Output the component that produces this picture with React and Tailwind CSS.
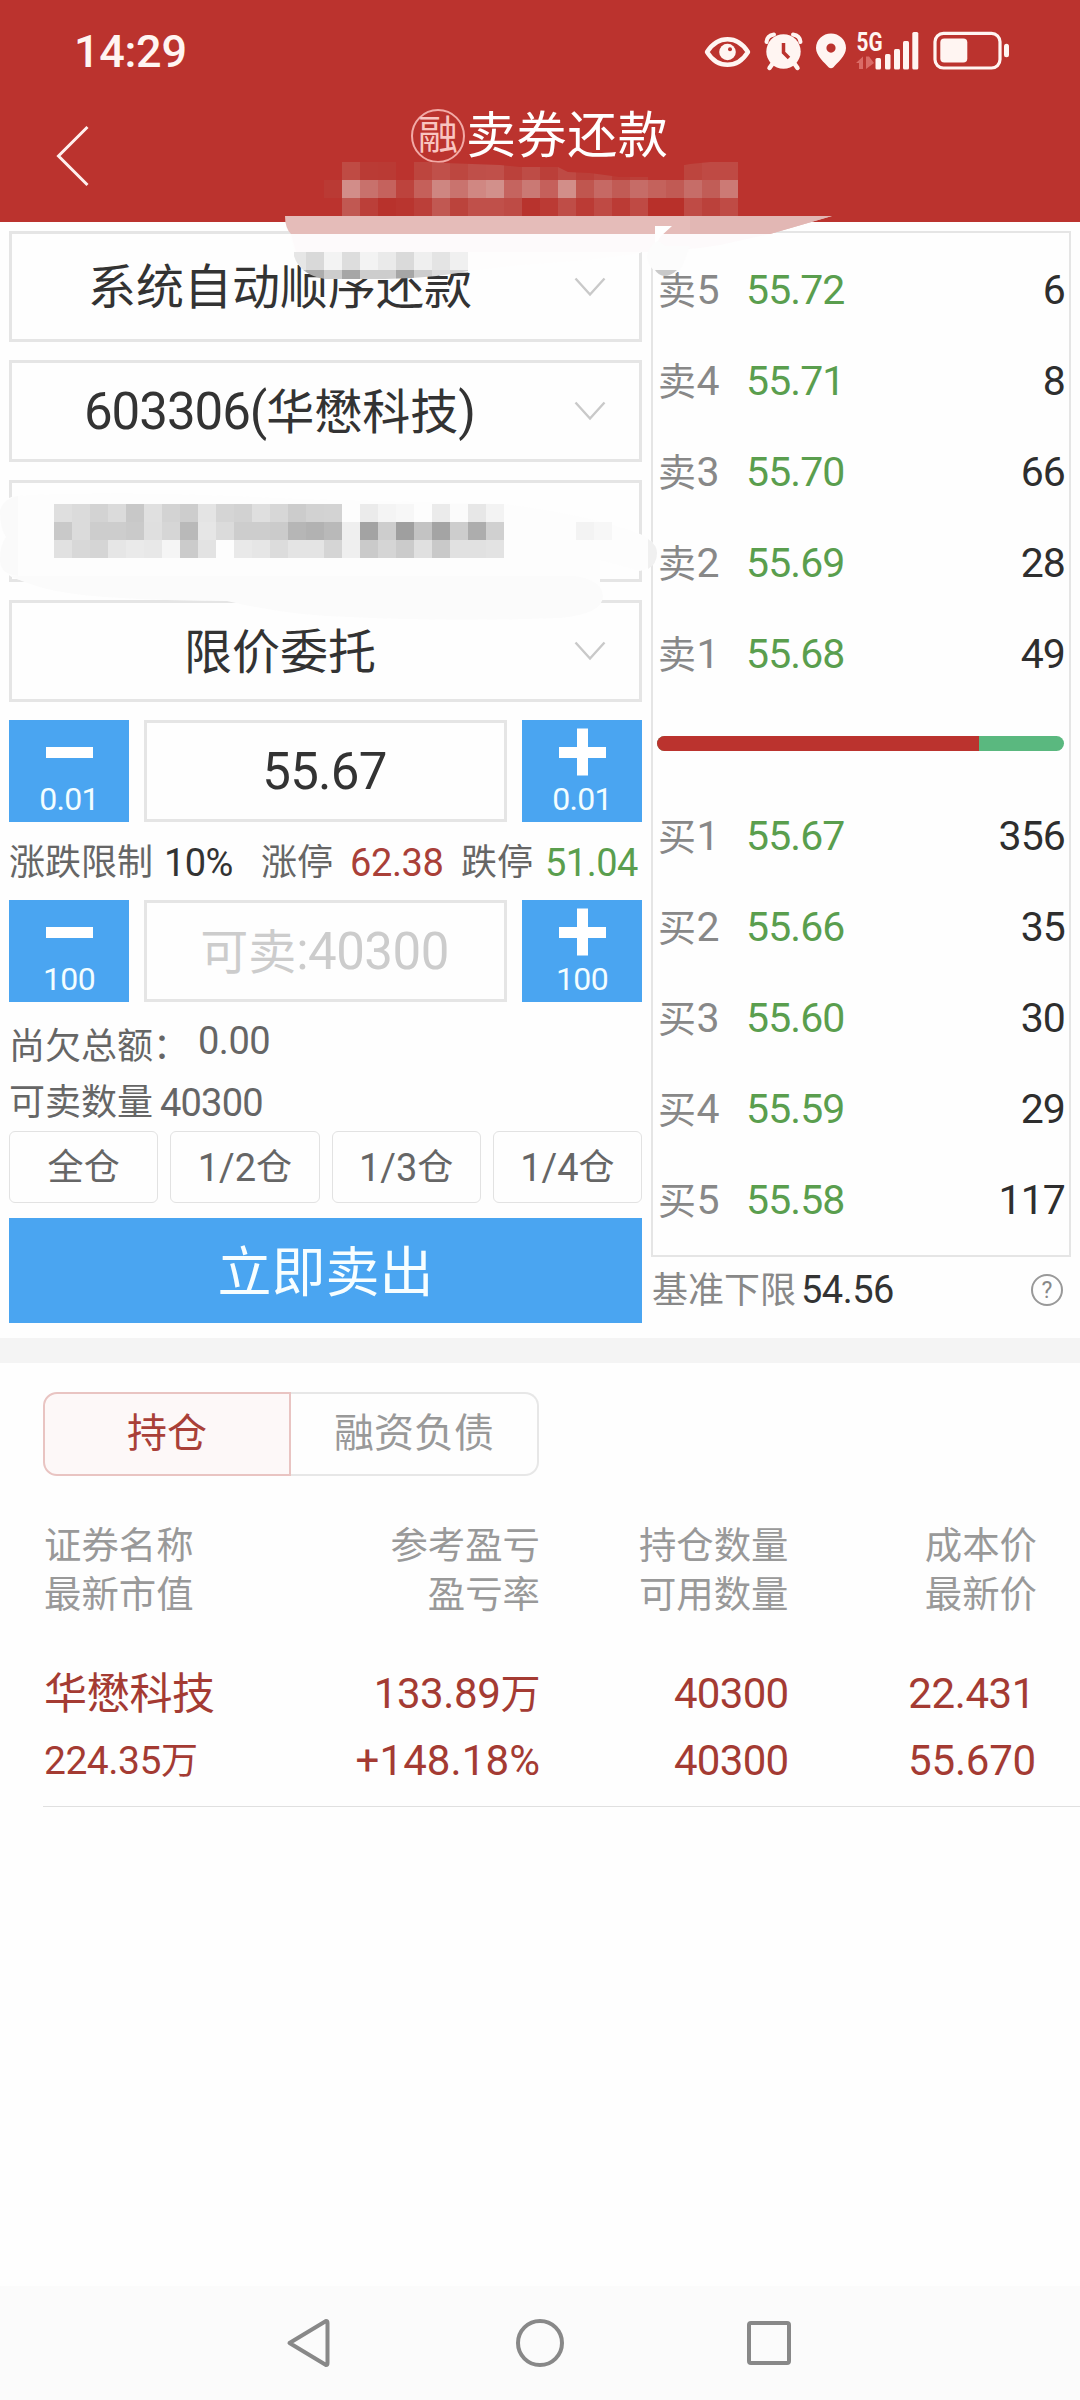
import React from "react";

const ASKS = [
  ["卖5", "55.72", "6"],
  ["卖4", "55.71", "8"],
  ["卖3", "55.70", "66"],
  ["卖2", "55.69", "28"],
  ["卖1", "55.68", "49"],
];
const BIDS = [
  ["买1", "55.67", "356"],
  ["买2", "55.66", "35"],
  ["买3", "55.60", "30"],
  ["买4", "55.59", "29"],
  ["买5", "55.58", "117"],
];

const TITLE_MOSAIC = [
  ["", "bf4b44", "ba3b35", "ba3a34", "", "bd453e", "c0504a", "bd4740", "bf4f49", "c0504a", "bb413b", "be4c46", "bb3f39", "be4a44", "bb3f39", "bd4640", "bb3b35", "bb3f39", "", "", "bd453e", "bf4a44", "bf4a44"],
  ["ba3a34", "d28d89", "c8716c", "c5625d", "bd433d", "c5605a", "ce8681", "c9736e", "d08782", "d2908b", "c5645f", "ca7974", "c5605b", "d28e89", "c0564f", "c66964", "c15b55", "c66c67", "c4625c", "c15a54", "c66d68", "c15d57", "cc7a75"],
  ["", "c15852", "bb3f39", "b8322c", "b9352f", "bb3f39", "c15852", "bb433c", "c0504a", "c0504a", "be4b45", "b8332d", "bb3a34", "bf4d47", "bb3b35", "bf4a44", "bb3b35", "bf4a44", "b8302a", "b8302a", "bf4b45", "bb413b", "bf4b45"],
];

const FIELD_MOSAIC = [
  ["dfdfdf", "dbdbdb", "d3d3d3", "dbdbdb", "c8c8c8", "e0e0e0", "d3d3d3", "cdcdcd", "e4e4e4", "d5d5d5", "d2d2d2", "dfdfdf", "d7d7d7", "cccccc", "d2d2d2", "d3d3d3", "fdfdfd", "ebebeb", "f4f4f4", "f7f7f7", "fdfdfd", "ebebeb", "fbfbfb", "e7e7e7", "f3f3f3"],
  ["c9c9c9", "dbdbdb", "cdcdcd", "cdcdcd", "cacaca", "dfdfdf", "d6d6d6", "b9b9b9", "e6e6e6", "dbdbdb", "cdcdcd", "cdcdcd", "cbcbcb", "b6b6b6", "b2b2b2", "b9b9b9", "efefef", "a3a3a3", "cdcdcd", "9f9f9f", "c3c3c3", "a4a4a4", "cdcdcd", "adadad", "d0d0d0"],
  ["e1e1e1", "d8d8d8", "d5d5d5", "e6e6e6", "eaeaea", "e8e8e8", "f5f5f5", "cbcbcb", "e3e3e3", "fdfdfd", "e9e9e9", "e6e6e6", "dcdcdc", "e4e4e4", "e4e4e4", "d5d5d5", "efefef", "cacaca", "d5d5d5", "cbcbcb", "e0e0e0", "c9c9c9", "e1e1e1", "e1e1e1", "e3e3e3"],
];

const NOTE_MOSAIC = [
  ["e6e6e6", "d9d9d9", "f3f3f3", "dddddd", "f3f3f3", "eaeaea", "dadada", "efefef", "e4e4e4", "f0f0f0"],
  ["bcbcbc", "acacac", "cdcdcd", "a6a6a6", "cdcdcd", "cdcdcd", "a6a6a6", "cdcdcd", "dcdcdc", "d0d0d0"],
];

function Mosaic({ rows, x, y }) {
  return rows.map((row, r) =>
    row.map((c, i) =>
      c ? <rect key={r + "-" + i} x={x + i * 18} y={y + r * 18} width="18" height="18" fill={"#" + c} shapeRendering="crispEdges" /> : null
    )
  );
}

/* Brush strokes and pixel blocks that hide the account details. */
function Redactions() {
  return (
    <svg className="pointer-events-none absolute left-0 top-0" width="1080" height="720" viewBox="0 0 1080 720">
      <defs>
        <clipPath id="titleClip">
          <path d="M320 162H414V161L445 163L500 165L520 167L558 167L568 172L590 173L620 177H660L668 168L690 164L710 162H738V216H320Z" />
        </clipPath>
        <clipPath id="noteClip">
          <path d="M294 252H468V271Q430 279 370 279H325Q300 275 294 256Z" />
        </clipPath>
      </defs>
      <g clipPath="url(#titleClip)">
        <Mosaic rows={TITLE_MOSAIC} x={324} y={162} />
      </g>
      <path d="M290 234H652Q656 246 640 253Q600 260 520 265L468 271H330Q296 268 294 250Z" fill="#fefdfd" />
      <path d="M291 234H770L720 245L700 248L650 252H296Z" fill="#fdfafb" />
      <path d="M285 216H832L770 234H291Q285 228 285 216Z" fill="#e5bcb9" />
      <path d="M690 216H832L770 234H690Z" fill="#e2b7b4" />
      <path d="M655 226H672L660 237L655 247Z" fill="#fff" />
      <g clipPath="url(#noteClip)">
        <Mosaic rows={NOTE_MOSAIC} x={288} y={252} />
      </g>
      <path d="M658 241Q647 246 647 258Q650 270 660 275H673Q680 272 684 262L690 246H666Z" fill="#fcfcfc" />
      <path d="M655 270H677Q671 276 664 276Q658 275 655 270Z" fill="#c9c9c9" />

      <path d="M14 496Q0 500 0 515Q0 529 6 537Q0 546 0 561Q3 576 20 580L170 596H600V560L640 571Q656 566 657 553Q655 540 640 534Q590 515 504 504L300 499Q120 490 14 496Z" fill="#fdfdfd" />
      <path d="M10 576Q40 590 75 594Q120 600 227 601Q290 616 350 617Q450 622 560 618Q603 614 603 596Q602 580 575 576Z" fill="#fbfbfb" />
      <path d="M0 511Q3 499 18 496V576Q0 574 0 560Q0 545 6 537Q0 528 0 511Z" fill="#fafafa" />
      <path d="M648 539Q657 545 657 553Q657 564 648 569Z" fill="#f0f0f0" />
      <Mosaic rows={FIELD_MOSAIC} x={54} y={504} />
      <rect x="576" y="522" width="18" height="18" fill="#f3f3f3" />
      <rect x="594" y="522" width="18" height="18" fill="#f7f7f7" />
    </svg>
  );
}

function StatusIcons() {
  return (
    <svg width="306" height="60" viewBox="704 21 306 60" fill="#fff5f2">
      <path d="M707 52Q715 39.200 727.500 39.200Q740 39.200 748 52Q740 64.800 727.500 64.800Q715 64.800 707 52Z" fill="none" stroke="#fff5f2" strokeWidth="4.400" strokeLinejoin="round" />
      <circle cx="727.500" cy="52" r="8.300" />
      <circle cx="730" cy="49.300" r="2" fill="#bb332e" />
      <circle cx="783.500" cy="51.500" r="17.200" />
      <path d="M766.500 42Q767 35.500 774 34.500M800.500 42Q800 35.500 793 34.500" fill="none" stroke="#fff5f2" strokeWidth="4" strokeLinecap="round" />
      <path d="M773 63L769.500 68M794 63L797.500 68" stroke="#fff5f2" strokeWidth="4.500" strokeLinecap="round" />
      <path d="M783.500 43V52.500L789 58" fill="none" stroke="#bb332e" strokeWidth="3.500" />
      <path fillRule="evenodd" d="M831 33.500A15 14.500 0 0 1 846 48C846 56 837 63 833.500 67.200Q831 69.500 828.500 67.200C825 63 816 56 816 48A15 14.500 0 0 1 831 33.500ZM831 43.500A4.600 4.600 0 1 0 831 52.700A4.600 4.600 0 1 0 831 43.500Z" />
      <text x="856.500" y="51.300" fontFamily="Roboto" fontSize="26" fontWeight="700" textLength="26" lengthAdjust="spacingAndGlyphs">5G</text>
      <path d="M856 63L863 56.500V69H859V63ZM866 56.500H869L874 63L866 69Z" fill="#da6b66" />
      <rect x="875.500" y="58" width="5.500" height="11.500" rx="1.500" />
      <rect x="885" y="54" width="5.500" height="15.500" rx="1.500" />
      <rect x="894" y="49" width="6" height="20.500" rx="1.500" />
      <rect x="903" y="41" width="6" height="28.500" rx="1.500" />
      <rect x="912.300" y="32" width="6" height="37.500" rx="1.500" />
      <rect x="935" y="33.300" width="65" height="34.700" rx="8.500" fill="none" stroke="#fff5f2" strokeWidth="3.200" />
      <rect x="940.300" y="38.500" width="27" height="24" rx="4" />
      <rect x="1004" y="43.700" width="5" height="13.500" rx="2.500" />
    </svg>
  );
}

function Chevron() {
  return (
    <svg width="32" height="20" viewBox="0 0 32 20" fill="none" stroke="#c9c9c9" strokeWidth="2.400">
      <path d="M1.500 1.500L16 17.500L30.500 1.500" />
    </svg>
  );
}

function Select({ children, tall, mixed }) {
  return (
    <div className={"flex items-center border-[3px] border-[#e5e5e5] bg-[#fefefe] " + (tall ? "h-[111px]" : "h-[102px]")}>
      <div className={"w-[536px] whitespace-nowrap text-center text-[48px] leading-none text-[#333] " + (mixed ? "" : "pt-[3px]")}>{children}</div>
      <div className="ml-[26px]">{children && <Chevron />}</div>
    </div>
  );
}

function StepButton({ plus, label }) {
  return (
    <div className="flex h-[102px] w-[120px] flex-col items-center bg-[#4aa5f1]">
      <svg className="mt-[8px]" width="47" height="48" viewBox="0 0 47 48" fill="#fff">
        <rect x="0" y="19" width="47" height="11" />
        {plus && <rect x="18" y="0.500" width="11" height="47" />}
      </svg>
      <div className="mt-[6px] text-[32px] leading-[34px] tracking-[-0.7px] text-[#f2fdff]">{label}</div>
    </div>
  );
}

function Stepper({ label, children }) {
  return (
    <div className="flex justify-between">
      <StepButton label={label} />
      <div className="flex h-[102px] w-[363px] items-center justify-center border-[3px] border-[#e5e5e5] pr-[2px]">{children}</div>
      <StepButton plus label={label} />
    </div>
  );
}

function Quote({ row }) {
  const [label, price, qty] = row;
  return (
    <div className="flex h-[91px] items-center pt-[3px] text-[41px] leading-none tracking-[-0.9px]">
      <div className="w-[88px] whitespace-nowrap text-[#888]">
        <span className="text-[38px] tracking-[0.5px]">{label[0]}</span>
        {label[1]}
      </div>
      <div className="text-[#5a9e4e]">{price}</div>
      <div className="ml-auto mr-[-1px] text-[#2e2e2e]">{qty}</div>
    </div>
  );
}

export default function App() {
  return (
    <div className="relative flex h-[2400px] w-[1080px] flex-col overflow-hidden bg-[#fefefe] font-['Roboto','Noto_Sans_CJK_SC',sans-serif]">
      <header className="h-[222px] bg-[#bb332e] text-white">
        <div className="flex h-[102px] items-center justify-between pl-[74px] pr-[70px]">
          <div className="text-[45px] font-medium leading-none tracking-[-0.3px] text-[#fff5f2]">14:29</div>
          <StatusIcons />
        </div>
        <div className="flex h-[68px] items-center">
          <svg className="ml-[56px] mt-[40px]" width="34" height="62" viewBox="0 0 34 62" fill="none" stroke="#fff0ee" strokeWidth="3">
            <path d="M31.500 2L2.500 31L31.500 60" />
          </svg>
          <div className="ml-[321px] flex items-center">
            <div className="flex h-[54px] w-[54px] items-center justify-center rounded-full border-2 border-[#f2aaa6] text-[40px] leading-none text-[#f9c5c1]">融</div>
            <div className="ml-[1px] whitespace-nowrap text-[50px] leading-none tracking-[0.6px]">卖券还款</div>
          </div>
        </div>
      </header>

      <main className="flex h-[1116px] pt-[9px]">
        <section className="ml-[9px] flex w-[633px] flex-col">
          <div className="flex flex-col gap-[18px]">
            <Select tall>系统自动顺序还款</Select>
            <Select mixed>
              <span className="text-[51px] leading-none tracking-[-1px]">603306(</span>华懋科技<span className="text-[51px] leading-none">)</span>
            </Select>
            <Select />
            <Select>限价委托</Select>
            <Stepper label="0.01">
              <span className="text-[51px] leading-none tracking-[-0.7px] text-[#333]">55.67</span>
            </Stepper>
          </div>
          <div className="flex h-[78px] items-center whitespace-nowrap pt-[3px] text-[36px] leading-none text-[#666]">
            <span className="w-[155px]">涨跌限制</span>
            <span className="w-[97px] text-[38px] tracking-[-0.6px] text-[#333]">10%</span>
            <span className="w-[89px]">涨停</span>
            <span className="w-[111px] text-[38px] tracking-[-0.4px] text-[#a94038]">62.38</span>
            <span className="w-[84px]">跌停</span>
            <span className="text-[38px] tracking-[-0.5px] text-[#5a9e4e]">51.04</span>
          </div>
          <Stepper label="100">
            <span className="whitespace-nowrap text-[48px] leading-none text-[#ccc]">
              可卖<span className="text-[51px] leading-none tracking-[-0.5px]">:40300</span>
            </span>
          </Stepper>
          <div className="mt-[13px] flex h-[58px] items-center text-[36px] leading-none text-[#666]">
            <span className="w-[189px] whitespace-nowrap pt-[5px]">尚欠总额：</span>
            <span className="mb-[7px] text-[38px] tracking-[-0.5px]">0.00</span>
          </div>
          <div className="flex h-[58px] items-center pt-[2px] text-[36px] leading-none text-[#666]">
            <span className="w-[151px] whitespace-nowrap">可卖数量</span>
            <span className="text-[38px] tracking-[-0.8px]">40300</span>
          </div>
          <div className="grid grid-cols-4 gap-[12px]">
            {["全", "1/2", "1/3", "1/4"].map((t) => (
              <div key={t} className="flex h-[72px] items-center justify-center rounded-[6px] border border-[#e2e2e2] pt-[2px] text-[36px] leading-none text-[#666]">
                <span className={t === "全" ? "" : "text-[38px]"}>{t}</span>仓
              </div>
            ))}
          </div>
          <div className="mt-[15px] flex h-[105px] items-center justify-center bg-[#4aa5f1] pt-[7px] text-[54px] leading-none text-[#f7feff]">立即卖出</div>
        </section>

        <section className="ml-[9px] flex w-[420px] flex-col">
          <div className="h-[1026px] border-2 border-[#e5e5e5] px-[5px] py-[10px]">
            {ASKS.map((r) => <Quote key={r[0]} row={r} />)}
            <div className="flex h-[91px] items-center">
              <div className="ml-[-1px] flex h-[15px] w-[408px] overflow-hidden rounded-full bg-[#5ab87f]">
                <div className="w-[322px] bg-[#bb332e]" />
              </div>
            </div>
            {BIDS.map((r) => <Quote key={r[0]} row={r} />)}
          </div>
          <div className="flex h-[66px] items-center text-[36px] leading-none text-[#888]">
            <span className="w-[150px] whitespace-nowrap pl-[1px] pt-[2px]">基准下限</span>
            <span className="text-[38px] tracking-[-0.5px] text-[#333]">54.56</span>
            <span className="ml-auto mr-[8px] flex h-[32px] w-[32px] items-center justify-center rounded-full border-2 border-[#999] text-[23px] leading-none text-[#888]">?</span>
          </div>
        </section>
      </main>

      <div className="h-[25px] bg-[#f4f4f4]" />

      <section className="pl-[43px]">
        <div className="mt-[29px] flex h-[84px] w-[496px] text-[40px] leading-none">
          <div className="flex w-[248px] items-center justify-center rounded-l-[14px] border-2 border-[#e9c4c2] bg-[#fdf8f8] pb-[1px] text-[#a94038]">持仓</div>
          <div className="flex w-[248px] items-center justify-center rounded-r-[14px] border-2 border-l-0 border-[#e7e7e7] pb-[1px] text-[#999]">融资负债</div>
        </div>
        <div className="mt-[46px] grid w-[994px] grid-cols-4 text-right text-[37.400px] leading-[49px] text-[#999]">
          <div className="pl-[1px] text-left">证券名称<br />最新市值</div>
          <div>参考盈亏<br />盈亏率</div>
          <div>持仓数量<br />可用数量</div>
          <div>成本价<br />最新价</div>
        </div>
        <div className="mt-[41px] grid h-[145px] w-[994px] grid-cols-4 content-start text-right text-[42px] leading-[66px] tracking-[-0.7px] text-[#a43b33]">
          <div className="pl-[1px] text-left text-[43px] tracking-[-0.3px]">华懋科技</div>
          <div className="tracking-[-0.4px]">133.89<span className="text-[40px]">万</span></div>
          <div>40300</div>
          <div className="pr-[2px] tracking-[-0.4px]">22.431</div>
          <div className="pl-[1px] text-left text-[39px] tracking-[-0.5px]">224.35<span className="text-[37px]">万</span></div>
          <div className="tracking-[0.1px]">+148.18%</div>
          <div>40300</div>
          <div className="pr-[1px] tracking-[-0.2px]">55.670</div>
        </div>
        <div className="h-px bg-[#e0e0e0]" />
      </section>

      <nav className="mt-auto flex h-[114px] bg-[#fbfbfb] pl-[286px] pt-[32px]">
        <svg width="506" height="50" viewBox="286 2318 506 50" fill="none" stroke="#888" strokeWidth="4" strokeLinejoin="round">
          <path d="M289.500 2343L326 2321Q327.500 2321 327.500 2323V2363Q327.500 2365 326 2365Z" />
          <circle cx="540" cy="2343" r="22" />
          <rect x="749" y="2323" width="40" height="40" rx="2" />
        </svg>
      </nav>

      <Redactions />
    </div>
  );
}
